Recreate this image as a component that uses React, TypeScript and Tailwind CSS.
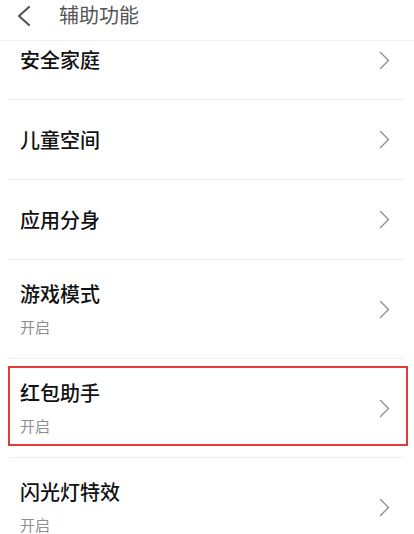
const items = [
  { title: '儿童空间' },
  { title: '应用分身' },
  { title: '游戏模式', sub: '开启' },
  { title: '红包助手', sub: '开启', marked: true },
  { title: '闪光灯特效', sub: '开启' },
];

const Chevron = () => (
  <svg width="11" height="19" viewBox="0 0 11 19" fill="none" className="shrink-0">
    <polyline points="1.5,1.5 9.5,9.5 1.5,17.5" stroke="#909090" strokeWidth="1.4" strokeLinecap="round" strokeLinejoin="round" />
  </svg>
);

export default function App() {
  return (
    <div
      className="w-[414px] h-[534px] overflow-hidden bg-white"
      style={{ fontFamily: '"Noto Sans CJK SC", "Noto Sans", sans-serif' }}
    >
      <div className="h-[41px] flex items-start pt-[3px] border-b border-[#f0f0f0]">
        <svg width="16" height="22" viewBox="0 0 16 22" fill="none" className="ml-[16px] mt-[2px]">
          <polyline points="13,2 3,11 13,20" stroke="#555" strokeWidth="2.2" strokeLinecap="round" strokeLinejoin="round" />
        </svg>
        <span className="ml-[27px] text-[20px] leading-[24px] text-[#555]">辅助功能</span>
      </div>

      <div className="px-[9px]">
        <div className="h-[59px] flex items-start justify-between pl-[11px] pr-[15px] pt-[6px] border-b border-[#eeeeee]">
          <span className="text-[20px] leading-[26px] font-medium text-[#111]">安全家庭</span>
          <span className="mt-[4px]">
            <Chevron />
          </span>
        </div>

        {items.map((it) => (
          <div
            key={it.title}
            className={
              'relative flex items-center justify-between pl-[11px] pr-[15px] border-b border-[#eeeeee] ' +
              (it.sub ? 'h-[99px]' : 'h-[80px]')
            }
          >
            <div className="flex flex-col">
              <span className="text-[20px] leading-[26px] font-medium text-[#111]">{it.title}</span>
              {it.sub && <span className="mt-[10px] text-[15px] leading-[20px] text-[#8e8e8e]">{it.sub}</span>}
            </div>
            <Chevron />
            {it.marked && (
              <div className="absolute left-[-1px] right-[-3px] top-[7px] bottom-[11px] border-2 border-[#e53935]" />
            )}
          </div>
        ))}
      </div>
    </div>
  );
}
